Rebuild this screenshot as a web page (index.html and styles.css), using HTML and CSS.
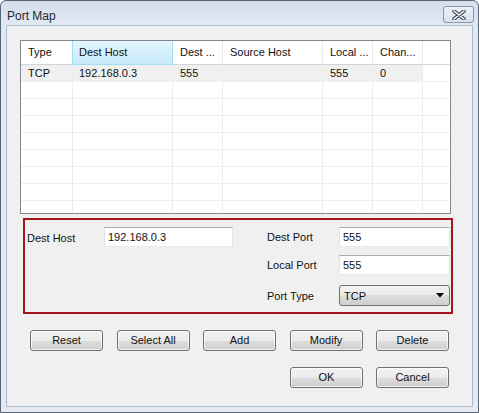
FILE: index.html
```html
<!DOCTYPE html>
<html>
<head>
<meta charset="utf-8">
<link rel="stylesheet" href="styles.css">
</head>
<body>
<div class="window">
  <div class="titlebar">
    <span class="title">Port Map</span>
    <div class="close">
      <svg width="14" height="10" viewBox="0 0 14 10">
        <path d="M2 1 L12 9 M12 1 L2 9" stroke="#3e4a5a" stroke-width="3.6" stroke-linecap="round"/>
        <path d="M2 1 L12 9 M12 1 L2 9" stroke="#ffffff" stroke-width="1.5" stroke-linecap="round"/>
      </svg>
    </div>
  </div>
  <div class="client">
    <div class="list">
      <div class="row header">
        <div class="cell c1">Type</div>
        <div class="cell c2 hot">Dest Host</div>
        <div class="cell c3">Dest ...</div>
        <div class="cell c4">Source Host</div>
        <div class="cell c5">Local ...</div>
        <div class="cell c6">Chan...</div>
        <div class="cell fill"></div>
      </div>
      <div class="row data sel">
        <div class="cell c1">TCP</div>
        <div class="cell c2">192.168.0.3</div>
        <div class="cell c3">555</div>
        <div class="cell c4"></div>
        <div class="cell c5">555</div>
        <div class="cell c6">0</div>
        <div class="cell fill"></div>
      </div>
      <div class="row data"><div class="cell c1"></div><div class="cell c2"></div><div class="cell c3"></div><div class="cell c4"></div><div class="cell c5"></div><div class="cell c6"></div><div class="cell fill"></div></div>
      <div class="row data"><div class="cell c1"></div><div class="cell c2"></div><div class="cell c3"></div><div class="cell c4"></div><div class="cell c5"></div><div class="cell c6"></div><div class="cell fill"></div></div>
      <div class="row data"><div class="cell c1"></div><div class="cell c2"></div><div class="cell c3"></div><div class="cell c4"></div><div class="cell c5"></div><div class="cell c6"></div><div class="cell fill"></div></div>
      <div class="row data"><div class="cell c1"></div><div class="cell c2"></div><div class="cell c3"></div><div class="cell c4"></div><div class="cell c5"></div><div class="cell c6"></div><div class="cell fill"></div></div>
      <div class="row data"><div class="cell c1"></div><div class="cell c2"></div><div class="cell c3"></div><div class="cell c4"></div><div class="cell c5"></div><div class="cell c6"></div><div class="cell fill"></div></div>
      <div class="row data"><div class="cell c1"></div><div class="cell c2"></div><div class="cell c3"></div><div class="cell c4"></div><div class="cell c5"></div><div class="cell c6"></div><div class="cell fill"></div></div>
      <div class="row data"><div class="cell c1"></div><div class="cell c2"></div><div class="cell c3"></div><div class="cell c4"></div><div class="cell c5"></div><div class="cell c6"></div><div class="cell fill"></div></div>
      <div class="row data"><div class="cell c1"></div><div class="cell c2"></div><div class="cell c3"></div><div class="cell c4"></div><div class="cell c5"></div><div class="cell c6"></div><div class="cell fill"></div></div>
    </div>

    <div class="editbox">
      <div class="leftcol">
        <div class="field">
          <span class="label lwide">Dest Host</span>
          <div class="input iwide">192.168.0.3</div>
        </div>
      </div>
      <div class="rightcol">
        <div class="field">
          <span class="label">Dest Port</span>
          <div class="input">555</div>
        </div>
        <div class="field">
          <span class="label">Local Port</span>
          <div class="input">555</div>
        </div>
        <div class="field selfield">
          <span class="label">Port Type</span>
          <div class="combo">
            <span>TCP</span>
            <svg width="8" height="5" viewBox="0 0 8 5"><path d="M0 0 H8 L4 4.5 Z" fill="#000"/></svg>
          </div>
        </div>
      </div>
    </div>

    <div class="btnrow">
      <div class="btn">Reset</div>
      <div class="btn">Select All</div>
      <div class="btn">Add</div>
      <div class="btn">Modify</div>
      <div class="btn">Delete</div>
    </div>
    <div class="btnrow right">
      <div class="btn">OK</div>
      <div class="btn">Cancel</div>
    </div>
  </div>
</div>
</body>
</html>
```

FILE: styles.css
```css
html, body {
  margin: 0;
  padding: 0;
  background: #ffffff;
}
body {
  font-family: "Liberation Sans", Arial, sans-serif;
  font-size: 11px;
  color: #111;
}
.window {
  box-sizing: border-box;
  width: 479px;
  height: 413px;
  border: 1px solid #5a6779;
  border-radius: 6px 6px 0 0;
  background: linear-gradient(#d3deec 0px, #dfe7f1 20px, #e3eaf3 40px, #e3eaf3 100%);
  padding: 0 5px 5px 5px;
  display: flex;
  flex-direction: column;
}
.titlebar {
  height: 24px;
  display: flex;
  align-items: center;
  justify-content: space-between;
}
.title {
  font-size: 12px;
  color: #1f2a36;
  margin-left: 1px;
  margin-top: 5px;
}
.close {
  box-sizing: border-box;
  width: 31px;
  height: 17px;
  margin-top: 3px;
  margin-right: -1px;
  border: 1px solid #8897ad;
  border-radius: 3px;
  background: linear-gradient(#eef2f8, #d7e0ec);
  display: flex;
  align-items: center;
  justify-content: center;
}
.client {
  flex: 1;
  border: 1px solid #aebbcb;
  background: #f0f0f0;
  display: flex;
  flex-direction: column;
}
.list {
  box-sizing: border-box;
  margin: 14px 0 0 13px;
  width: 431px;
  height: 174px;
  border: 1px solid #828790;
  background: #fff;
  overflow: hidden;
}
.row {
  display: flex;
}
.cell {
  box-sizing: border-box;
  flex: none;
  white-space: nowrap;
  overflow: hidden;
}
.c1 { width: 52px; }
.c2 { width: 100px; }
.c3 { width: 50px; }
.c4 { width: 100px; }
.c5 { width: 50px; }
.c6 { width: 50px; }
.fill { flex: 1; }
.header .cell {
  height: 24px;
  line-height: 23px;
  padding-left: 7px;
  border-right: 1px solid #e4e7eb;
  border-bottom: 1px solid #d5d5d5;
}
.header .c2 { padding-left: 6px; }
.header .fill { border-right: none; }
.header .hot {
  background: linear-gradient(#e3f6fe, #c7ebfb);
  border-left: 1px solid #a5dcf6;
  border-right: 1px solid #a5dcf6;
  margin-left: -1px;
  width: 101px;
  border-bottom: 1px solid #a5dcf6;
}
.data .cell {
  height: 17px;
  line-height: 17px;
  padding-left: 7px;
  border-right: 1px solid #ededed;
  border-bottom: 1px solid #ededed;
}
.data .c2 { padding-left: 6px; }
.data .fill { border-right: none; margin-right: 1px; }
.sel .c1, .sel .c2, .sel .c3, .sel .c4, .sel .c5, .sel .c6 {
  background: #f0f0f0;
}
.editbox {
  box-sizing: border-box;
  margin: 4px 0 0 16px;
  width: 430px;
  height: 96px;
  border: 2px solid #a3161b;
  padding: 7px 0 0 2px;
  display: flex;
}
.leftcol {
  display: flex;
  flex-direction: column;
}
.rightcol {
  margin-left: 34px;
  display: flex;
  flex-direction: column;
  gap: 8px;
}
.field {
  display: flex;
  align-items: center;
}
.selfield {
  margin-top: 2px;
}
.label {
  width: 72px;
  flex: none;
}
.lwide {
  width: 77px;
  margin-top: 1px;
}
.input {
  box-sizing: border-box;
  width: 111px;
  height: 20px;
  line-height: 18px;
  padding-left: 3px;
  background: #fff;
  border: 1px solid #dfe3e9;
  border-top-color: #abadb3;
  border-bottom-color: #e3e9ef;
}
.iwide {
  width: 129px;
}
.combo {
  box-sizing: border-box;
  width: 111px;
  height: 21px;
  border: 1px solid #707070;
  border-radius: 3px;
  background: linear-gradient(#f2f2f2 0%, #ebebeb 50%, #dddddd 50%, #cfcfcf 100%);
  display: flex;
  align-items: center;
  justify-content: space-between;
  padding: 0 5px 0 4px;
}
.btnrow {
  margin: 16px 0 0 23px;
  width: 419px;
  display: flex;
  justify-content: space-between;
}
.btnrow.right {
  justify-content: flex-end;
  gap: 13px;
}
.btn {
  box-sizing: border-box;
  width: 73px;
  height: 21px;
  line-height: 19px;
  text-align: center;
  border: 1px solid #707070;
  border-radius: 3px;
  background: linear-gradient(#f2f2f2 0%, #ebebeb 50%, #dddddd 50%, #cfcfcf 100%);
  box-shadow: inset 0 0 0 1px rgba(255,255,255,0.7);
}
```
